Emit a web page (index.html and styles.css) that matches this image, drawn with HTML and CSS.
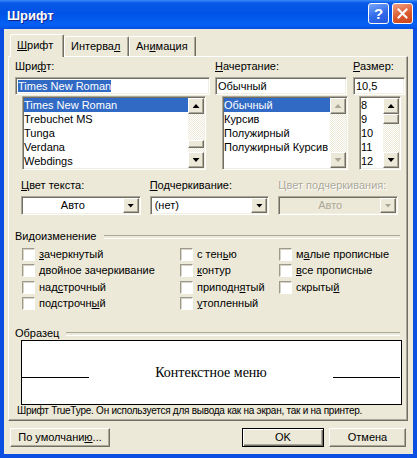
FILE: index.html
```html
<!DOCTYPE html>
<html lang="ru">
<head>
  <meta charset="UTF-8">
  <title>Шрифт</title>
  <link rel="stylesheet" href="styles.css">
</head>
<body>
<div class="window">
  <div class="titlebar">
    <span class="caption">Шрифт</span>
    <span class="tbtn help">?</span>
    <span class="tbtn close"><svg width="11" height="11" viewBox="0 0 11 11"><path d="M1.5 1.5L9.5 9.5M9.5 1.5L1.5 9.5" stroke="#fff" stroke-width="2" stroke-linecap="square"/></svg></span>
  </div>

  <div class="client">
    <div class="tabs">
      <div class="tab active tab-font"><u>Ш</u>рифт</div>
      <div class="tab tab-spacing">Интерва<u>л</u></div>
      <div class="tab tab-anim">Ан<u>и</u>мация</div>
    </div>

    <div class="panel">
      <div class="row1">
        <div class="col-font">
          <div class="lbl">Шри<u>ф</u>т:</div>
          <div class="edit"><span class="sel">Times New Roman</span></div>
          <div class="list font-list">
            <ul class="items">
              <li class="on">Times New Roman</li>
              <li>Trebuchet MS</li>
              <li>Tunga</li>
              <li>Verdana</li>
              <li>Webdings</li>
            </ul>
            <div class="vscroll">
              <span class="sbtn raised"><i class="up"></i></span>
              <span class="track"><span class="thumb raised font-thumb"></span></span>
              <span class="sbtn raised"><i class="down"></i></span>
            </div>
          </div>
        </div>

        <div class="col-style">
          <div class="lbl"><u>Н</u>ачертание:</div>
          <div class="edit">Обычный</div>
          <div class="list style-list">
            <ul class="items">
              <li class="on">Обычный</li>
              <li>Курсив</li>
              <li>Полужирный</li>
              <li>Полужирный Курсив</li>
            </ul>
            <div class="vscroll">
              <span class="sbtn raised"><i class="up off"></i></span>
              <span class="track"></span>
              <span class="sbtn raised"><i class="down off"></i></span>
            </div>
          </div>
        </div>

        <div class="col-size">
          <div class="lbl"><u>Р</u>азмер:</div>
          <div class="edit">10,5</div>
          <div class="list size-list">
            <ul class="items">
              <li>8</li>
              <li>9</li>
              <li>10</li>
              <li>11</li>
              <li>12</li>
            </ul>
            <div class="vscroll">
              <span class="sbtn raised"><i class="up"></i></span>
              <span class="track"><span class="thumb raised size-thumb"></span></span>
              <span class="sbtn raised"><i class="down"></i></span>
            </div>
          </div>
        </div>
      </div>

      <div class="row2">
        <div class="combo-col">
          <div class="lbl"><u>Ц</u>вет текста:</div>
          <div class="combo"><span class="val center">Авто</span><span class="drop raised"><i class="down"></i></span></div>
        </div>
        <div class="combo-col">
          <div class="lbl"><u>П</u>одчеркивание:</div>
          <div class="combo"><span class="val">(нет)</span><span class="drop raised"><i class="down"></i></span></div>
        </div>
        <div class="combo-col">
          <div class="lbl disabled">Цвет подчеркивания:</div>
          <div class="combo combo-off"><span class="val center">Авто</span><span class="drop raised"><i class="down off"></i></span></div>
        </div>
      </div>

      <div class="group group-effects">Видоизменение</div>
      <div class="checks">
        <label class="chk"><span class="box"></span><span><u>з</u>ачеркнутый</span></label>
        <label class="chk"><span class="box"></span><span><u>д</u>войное зачеркивание</span></label>
        <label class="chk"><span class="box"></span><span>над<u>с</u>трочный</span></label>
        <label class="chk"><span class="box"></span><span>подстрочн<u>ы</u>й</span></label>
        <label class="chk"><span class="box"></span><span>с тен<u>ь</u>ю</span></label>
        <label class="chk"><span class="box"></span><span><u>к</u>онтур</span></label>
        <label class="chk"><span class="box"></span><span>приподн<u>я</u>тый</span></label>
        <label class="chk"><span class="box"></span><span><u>у</u>топленный</span></label>
        <label class="chk"><span class="box"></span><span>м<u>а</u>лые прописные</span></label>
        <label class="chk"><span class="box"></span><span><u>в</u>се прописные</span></label>
        <label class="chk"><span class="box"></span><span>скрыты<u>й</u></span></label>
      </div>

      <div class="group group-sample">Образец</div>
      <div class="preview">
        <span class="rule rule-left"></span>
        <span class="sample">Контекстное меню</span>
        <span class="rule rule-right"></span>
      </div>
      <div class="info">Шрифт TrueType. Он используется для вывода как на экран, так и на принтер.</div>
    </div>

    <div class="buttons">
      <span class="btn raised btn-default">По умолчани<u>ю</u>...</span>
      <span class="spacer"></span>
      <span class="btn btn-ok">OK</span>
      <span class="btn raised btn-cancel">Отмена</span>
    </div>
  </div>
</div>
</body>
</html>
```

FILE: styles.css
```css
* {box-sizing: border-box;}
body {margin: 0; font: 11px/13px "Liberation Sans", Arial, sans-serif; color: #000; background: #fff;}
u {text-decoration: underline; text-underline-offset: 1px;}

/* window frame */
.window {width: 417px; height: 458px; display: flex; flex-direction: column; background: #0a4fe2;}
.titlebar {height: 29px; flex: none; display: flex; align-items: center; padding: 0 4px 0 7px;
  background: linear-gradient(180deg, #3a8cf8, #0a5ae8 10%, #0052e6 45%, #0660f4 85%, #0556ea 95%, #0a4fe2);}
.caption {flex: 1; color: #fff; font: bold 13px/15px "Liberation Sans", Arial, sans-serif; text-shadow: 1px 1px #10248c; padding-top: 1px;}
.tbtn {width: 21px; height: 21px; align-self: flex-start; margin: 3px 0 0 3px; border: 1px solid #fff; border-radius: 3px;
  display: flex; align-items: center; justify-content: center;}
.help {background: linear-gradient(160deg, #7aa6fb, #2f6ae9 55%, #2358dc); color: #fff; font: bold 15px/15px "Liberation Sans", Arial, sans-serif;}
.close {background: linear-gradient(160deg, #f0a184, #dc5a2f 55%, #c9431a);}

.client {flex: 1; margin: 0 4px 4px; padding-top: 5px; background: #ece9d8;}

/* tabs */
.tabs {display: flex; align-items: flex-end; height: 22px; margin-left: 6px; position: relative; z-index: 1;}
.tab {height: 20px; padding-left: 6px; line-height: 18px; border: 1px solid; border-bottom: 0; border-color: #fff #716f64 transparent #fff;
  border-radius: 2px 2px 0 0; box-shadow: inset -1px 0 #aca899; background: #ece9d8;}
.tab.active {height: 23px; margin-bottom: -1px; line-height: 20px;}
.tab-font {width: 54px;}
.tab-spacing {width: 65px;}
.tab-anim {width: 67px;}

.panel {margin-left: 4px; width: 400px; height: 365px; padding-top: 3px; border: 1px solid; border-color: #fff #716f64 #716f64 #fff;
  box-shadow: inset -1px -1px #aca899;}

/* common 3d borders */
.raised {border: 1px solid; border-color: #fff #716f64 #716f64 #fff; box-shadow: inset -1px -1px #aca899; background: #ece9d8;}

.lbl {height: 13px; margin-bottom: 4px; white-space: nowrap;}
.lbl.disabled {color: #aca899; text-shadow: 1px 1px #fff;}

/* font / style / size */
.row1 {display: flex; margin-left: 6px;}
.col-font {width: 195px;}
.col-style {width: 132px; margin-left: 5px;}
.col-size {width: 52px; margin-left: 6px;}

.edit {height: 18px; padding: 2px; line-height: 12px; white-space: nowrap; overflow: hidden; background: #fff;
  border: 1px solid; border-color: #aca899 #fff #fff #aca899; box-shadow: inset 1px 1px #716f64, inset -1px -1px #f1efe2;}
.sel {background: #316ac5; color: #fff;}

.list {display: flex; height: 74px; margin-top: 1px; padding: 1px; background: #fff;
  border: 1px solid; border-color: #aca899 #fff #fff #aca899; box-shadow: inset 1px 1px #716f64, inset -1px -1px #f1efe2;}
.font-list {width: 184px; margin-left: 7px;}
.style-list {width: 126px; margin-left: 7px;}
.size-list {width: 42px; margin-left: 6px;}
.items {flex: 1; margin: 0; padding: 0; list-style: none; overflow: hidden;}
.items li {height: 14px; line-height: 13px; white-space: nowrap; padding-top: 1px;}
.items li.on {background: #316ac5; color: #fff;}

.vscroll {width: 16px; flex: none; display: flex; flex-direction: column;
  background: repeating-conic-gradient(#fff 0 25%, #ece9d8 0 50%) 0 0/2px 2px;}
.sbtn {height: 16px; flex: none; display: flex; align-items: center; justify-content: center;}
.track {flex: 1;}
.thumb {display: block; height: 8px;}
.font-thumb {margin-top: 26px;}
.size-thumb {height: 10px;}

.up, .down {display: block; width: 7px; height: 4px; background: #000;}
.up {clip-path: polygon(50% 0, 100% 100%, 0 100%);}
.down {clip-path: polygon(0 0, 100% 0, 50% 100%);}
.up.off, .down.off {background: #aca899;}

/* colour / underline */
.row2 {display: flex; margin: 9px 0 0 12px;}
.combo-col {width: 120px; margin-right: 9px;}
.combo {height: 19px; display: flex; padding: 1px; background: #fff;
  border: 1px solid; border-color: #aca899 #fff #fff #aca899; box-shadow: inset 1px 1px #716f64, inset -1px -1px #f1efe2;}
.combo .val {flex: 1; padding-left: 3px; line-height: 15px; white-space: nowrap;}
.combo .val.center {text-align: center; padding-left: 0;}
.combo .drop {width: 16px; flex: none; display: flex; align-items: center; justify-content: center;}
.combo-off {background: #ece9d8;}
.combo-off .val {color: #aca899;}

/* groups */
.group {display: flex; align-items: center; height: 13px; margin: 15px 0 0 6px; white-space: nowrap;}
.group::after {content: ""; flex: 1; height: 2px; margin: 0 7px 0 8px; border-top: 1px solid #aca899; border-bottom: 1px solid #fff;}
.group-sample {margin-top: 15px;}
.group-sample::after {margin-left: 7px;}

.checks {display: grid; grid-auto-flow: column; grid-template-rows: repeat(4, 16.5px); grid-template-columns: 158px 99px 1fr;
  margin: 3px 0 0 13px;}
.chk {display: flex; align-items: center; white-space: nowrap;}
.box {width: 13px; height: 13px; flex: none; margin-right: 4px; background: #fff;
  border: 1px solid; border-color: #9d9a8c #fff #fff #9d9a8c; box-shadow: inset 1px 1px #d8d5c8;}

.preview {display: flex; align-items: center; width: 381px; height: 65px; margin-left: 12px; background: #fff; border: 1px solid #000;}
.rule {width: 67px; height: 1px; flex: none; margin-top: 10px; background: #000;}
.rule-right {margin-right: 1px;}
.sample {flex: 1; text-align: center; font: 14px/16px "Liberation Serif", "Times New Roman", serif;}

.info {margin-left: 8px; font-size: 10px; line-height: 12px; letter-spacing: -0.25px; white-space: nowrap;}

/* dialog buttons */
.buttons {display: flex; margin: 7px 7px 0 6px;}
.btn {height: 19px; line-height: 17px; text-align: center; white-space: nowrap;}
.btn-default {width: 100px;}
.spacer {flex: 1;}
.btn-ok {width: 82px; border: 1px solid #000; background: #ece9d8;
  box-shadow: inset 1px 1px #fff, inset -1px -1px #716f64, inset -2px -2px #aca899;}
.btn-cancel {width: 77px; margin-left: 5px;}
```
